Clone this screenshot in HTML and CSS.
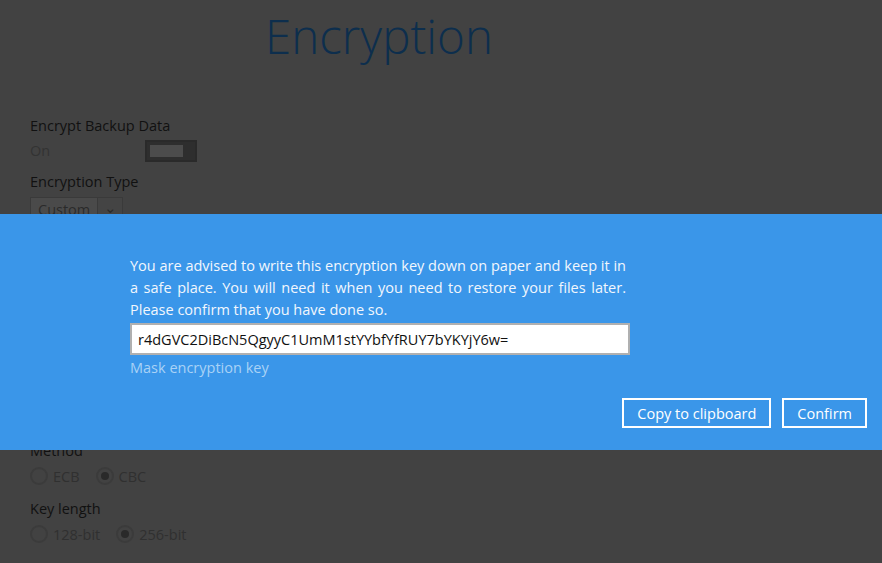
FILE: index.html
```html
<!DOCTYPE html>
<html lang="en">
<head>
  <meta charset="UTF-8">
  <meta name="viewport" content="width=device-width, initial-scale=1.0">
  <title>Encryption</title>
  <link rel="stylesheet" href="styles.css">
</head>
<body>
  <div class="page">
    <h1>Encryption</h1>

    <div class="field">
      <div class="label">Encrypt Backup Data</div>
      <div class="toggle-row">
        <span class="muted">On</span>
        <span class="toggle"><span class="toggle-bar"></span><span class="toggle-knob"></span></span>
      </div>
    </div>

    <div class="field">
      <div class="label">Encryption Type</div>
      <div class="select"><span class="select-text">Custom</span><span class="select-arrow">&#8964;</span></div>
    </div>

    <div class="spacer"></div>

    <div class="field">
      <div class="label">Method</div>
      <div class="radios">
        <span class="radio"><span class="dot"></span>ECB</span>
        <span class="radio checked"><span class="dot"></span>CBC</span>
      </div>
    </div>

    <div class="field">
      <div class="label">Key length</div>
      <div class="radios">
        <span class="radio"><span class="dot"></span>128-bit</span>
        <span class="radio checked"><span class="dot"></span>256-bit</span>
      </div>
    </div>
  </div>

  <div class="dialog">
    <div class="dialog-body">
      <p class="message">
        <span class="line">You are advised to write this encryption key down on paper and keep it in</span>
        <span class="line">a safe place. You will need it when you need to restore your files later.</span>
        <span class="line last">Please confirm that you have done so.</span>
      </p>
      <input class="key" type="text" value="r4dGVC2DiBcN5QgyyC1UmM1stYYbfYfRUY7bYKYjY6w=">
      <a class="mask" href="#">Mask encryption key</a>
    </div>
    <div class="dialog-buttons">
      <button type="button">Copy to clipboard</button>
      <button type="button">Confirm</button>
    </div>
  </div>
</body>
</html>
```

FILE: styles.css
```css
body {
  margin: 0;
  background-color: #424242;
  font-family: "Open Sans", "Noto Sans", sans-serif;
  color: #111;
  overflow: hidden;
}

.page {
  padding: 0 30px;
}

h1 {
  margin: 0 0 0 235px;
  padding-top: 3px;
  font-size: 47.5px;
  font-weight: 300;
  color: #0d2e4d;
  height: 112px;
}

.field {
  margin-bottom: 8px;
}

.label {
  font-size: 14.5px;
  line-height: 22px;
}

.muted {
  color: #333;
  font-size: 14.5px;
}

.toggle-row {
  display: flex;
  align-items: center;
  height: 26px;
}

.toggle-row .muted {
  width: 115px;
}

.toggle {
  display: flex;
  width: 52px;
  height: 22px;
  box-sizing: border-box;
  border: 2px solid #2a2a2a;
  background: #2e2e2e;
  margin-top: 2px;
}

.toggle-bar {
  flex: 1;
  margin: 3px 0 3px 3px;
  background: #4c4c4c;
}

.toggle-knob {
  width: 12px;
}

.select {
  display: flex;
  width: 93px;
  height: 26px;
  margin-top: 4px;
  box-sizing: border-box;
  border: 1px solid #3a3a3a;
  background: #4a4a4a;
  font-size: 14.5px;
  color: #2a2a2a;
}

.select-text {
  padding: 2px 7px;
}

.select-arrow {
  margin-left: auto;
  width: 28px;
  text-align: center;
  background: #444;
  border-left: 1px solid #3a3a3a;
}

.spacer {
  height: 209px;
}

.radios {
  display: flex;
  gap: 16px;
  height: 28px;
  align-items: center;
  font-size: 14.5px;
  color: #303030;
}

.radio {
  display: flex;
  align-items: center;
  gap: 5px;
}

.dot {
  width: 14px;
  height: 14px;
  border: 2px solid #3b3b3b;
  border-radius: 50%;
  box-sizing: content-box;
  display: flex;
  align-items: center;
  justify-content: center;
}

.radio.checked .dot::after {
  content: "";
  width: 8px;
  height: 8px;
  border-radius: 50%;
  background: #2a2a2a;
}

.dialog {
  position: absolute;
  left: 0;
  right: 0;
  top: 214px;
  height: 236px;
  background: #3a96e9;
  color: #fff;
}

.dialog-body {
  width: 496px;
  margin-left: 130px;
  padding-top: 41px;
}

.message {
  margin: 0;
  font-size: 14.5px;
  line-height: 22px;
  color: #f2f7fd;
}

.line {
  display: block;
  text-align: justify;
  text-align-last: justify;
  white-space: nowrap;
}

.line.last {
  text-align-last: left;
}

.key {
  display: block;
  width: 500px;
  height: 32px;
  margin-top: 2px;
  box-sizing: border-box;
  border: 2px solid #b0b0b0;
  padding: 0 6px;
  font-family: inherit;
  font-size: 14.5px;
  color: #111;
  outline: none;
}

.mask {
  display: inline-block;
  margin-top: 2px;
  font-size: 14.5px;
  line-height: 22px;
  color: #a9d2f6;
  text-decoration: none;
}

.dialog-buttons {
  display: flex;
  justify-content: flex-end;
  gap: 11px;
  margin: 19px 15px 0 0;
}

button {
  height: 30px;
  padding: 0 13px;
  background: transparent;
  border: 2px solid #fff;
  color: #fff;
  font-family: inherit;
  font-size: 14.5px;
}
```
